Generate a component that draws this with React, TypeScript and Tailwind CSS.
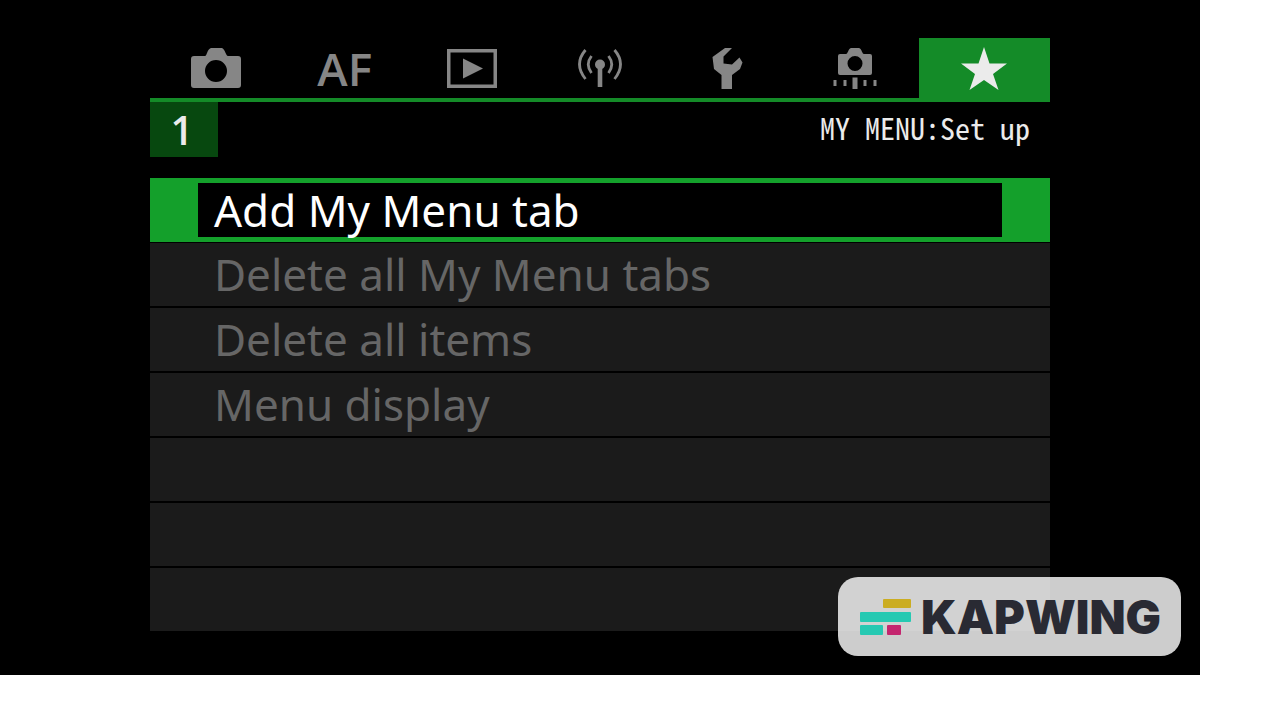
import React, { useState } from "react";
import clsx from "clsx";

const CameraIcon = () => (
  <svg width="50" height="40" viewBox="0 0 50 40" fill="currentColor">
    <path
      fillRule="evenodd"
      d="M3 8H14C16 8 16 1 20 0H31C34 1 35 8 37 8H47Q50 8 50 11V37Q50 40 47 40H3Q0 40 0 37V11Q0 8 3 8ZM25 12A11 11 0 1 0 25 34A11 11 0 1 0 25 12Z"
    />
  </svg>
);

const PlaybackIcon = () => (
  <svg width="50" height="39" viewBox="0 0 50 39" fill="currentColor">
    <path fillRule="evenodd" d="M0 0H50V39H0ZM3.5 3.5V35.5H46.5V3.5Z" />
    <path d="M16 9.5L36 19.5L16 29.5Z" />
  </svg>
);

const WirelessIcon = () => (
  <svg
    width="44"
    height="38"
    viewBox="0 0 44 38"
    fill="none"
    stroke="currentColor"
    strokeWidth="2.8"
  >
    <path d="M7.5 1Q-4.5 15 7.5 30M13.5 7Q7 15.5 13.5 24M30.5 7Q37 15.5 30.5 24M36.5 1Q48.5 15 36.5 30" />
    <circle cx="22" cy="15.5" r="5" fill="currentColor" stroke="none" />
    <path d="M22 15V38" strokeWidth="4.6" />
  </svg>
);

const WrenchIcon = () => (
  <svg width="31" height="41" viewBox="0 0 31 41" fill="currentColor">
    <path d="M13 0H20L11.5 8.5V15.5L20 16.5L27.5 9.5L30.5 14.5L28 21L20 27V41H9.5V27L2 21L0.5 9Z" />
  </svg>
);

const CustomIcon = () => (
  <svg width="44" height="41" viewBox="0 0 44 41" fill="currentColor">
    <path
      fillRule="evenodd"
      d="M7 6H13C15 6 15 1 18 0H26C29 1 29 6 31 6H37Q39 6 39 8V25Q39 27 37 27H7Q5 27 5 25V8Q5 6 7 6ZM22 8A7.5 7.5 0 1 0 22 23A7.5 7.5 0 1 0 22 8Z"
    />
    <path d="M0.5 32H3.5V38H0.500ZM10.5 32H13.5V38H10.5ZM19.5 29.5H24.5V41H19.5ZM30.5 32H33.5V38H30.5ZM40.5 32H43.5V38H40.5Z" />
  </svg>
);

const StarIcon = () => (
  <svg width="46" height="43" viewBox="0 0 46 43" fill="currentColor">
    <path d="M23 0L28.5 16.5H46L32 27L37.5 43L23 33L8.5 43L14 27L0 16.5H17.5Z" />
  </svg>
);

const tabs = [
  { id: "shoot", label: "Shooting", icon: <CameraIcon /> },
  { id: "af", label: "AF", icon: <span>AF</span> },
  { id: "play", label: "Playback", icon: <PlaybackIcon /> },
  { id: "wireless", label: "Wireless", icon: <WirelessIcon /> },
  { id: "setup", label: "Set-up", icon: <WrenchIcon /> },
  { id: "custom", label: "Custom functions", icon: <CustomIcon /> },
  { id: "mymenu", label: "My Menu", icon: <StarIcon /> },
];

const menuItems = [
  "Add My Menu tab",
  "Delete all My Menu tabs",
  "Delete all items",
  "Menu display",
  "",
  "",
  "",
];

const Watermark = () => (
  <div className="absolute right-[19px] bottom-[19px] flex h-[79px] w-[343px] items-center gap-[10px] rounded-[20px] bg-[#fdfdfd]/81 pl-[22px]">
    <svg width="51" height="36" viewBox="0 0 51 36">
      <rect x="23" y="0" width="28" height="9" rx="1" fill="#cbad22" />
      <rect x="0" y="13" width="51" height="10" rx="1" fill="#26c9b2" />
      <rect x="0" y="26" width="23" height="10" rx="1" fill="#26c9b2" />
      <rect x="27" y="26" width="14" height="10" rx="1" fill="#c4266f" />
    </svg>
    <span className="font-['Inter',sans-serif] text-[47px] leading-none font-black text-[#292a33]">
      KAPWING
    </span>
  </div>
);

const App = () => {
  const [activeTab, setActiveTab] = useState("mymenu");
  const [selected, setSelected] = useState(0);

  return (
    <div className="min-h-screen bg-white pr-[62px] font-['Noto_Sans',sans-serif]">
      <main className="relative bg-black px-[150px] pt-[38px] pb-[44px]">
        <nav className="flex h-16">
          {tabs.map((tab) => (
            <button
              key={tab.id}
              aria-label={tab.label}
              onClick={() => setActiveTab(tab.id)}
              className={clsx(
                "flex items-center justify-center border-b-4 border-[#148b28] font-['Open_Sans',sans-serif] text-[46px] leading-none font-semibold first:w-[131px] last:w-[131px] [&:not(:first-child):not(:last-child)]:flex-1",
                activeTab === tab.id
                  ? "bg-[#148b28] text-[#ebebeb]"
                  : "text-[#868686]",
              )}
            >
              {tab.icon}
            </button>
          ))}
        </nav>

        <div className="flex items-start justify-between pb-[21px]">
          <button className="h-[55px] w-[68px] bg-[#07480f] pr-1 font-['Open_Sans',sans-serif] text-[40px] leading-none font-semibold text-[#ebebeb]">
            1
          </button>
          <h1 className="pr-5 font-['Noto_Sans_Mono_CJK_JP','Noto_Sans_CJK_JP',monospace] text-[30px] leading-[50px] text-[#ebebeb]">
            MY MENU:Set up
          </h1>
        </div>

        <ul>
          {menuItems.map((item, idx) => (
            <li
              key={idx}
              className={clsx(
                "border-black last:border-b-0",
                selected === idx ? "border-b" : "border-b-2",
              )}
            >
              {item ? (
                <button
                  onClick={() => setSelected(idx)}
                  className={clsx(
                    "block w-full text-left text-[44px]",
                    selected === idx
                      ? "h-16 bg-[#14a02b] px-12 py-[5px] text-white"
                      : "h-[63px] bg-[#1b1b1b] px-16 leading-[63px] text-[#666666]",
                  )}
                >
                  {selected === idx ? (
                    <span className="block h-full bg-black px-4 leading-[54px]">
                      {item}
                    </span>
                  ) : (
                    item
                  )}
                </button>
              ) : (
                <div className="h-[63px] bg-[#1b1b1b]" />
              )}
            </li>
          ))}
        </ul>

        <Watermark />
      </main>
    </div>
  );
};

export default App;
